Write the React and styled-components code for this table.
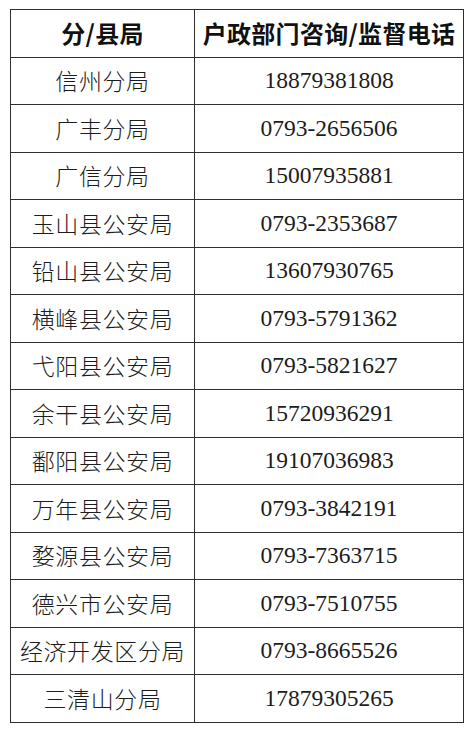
import React from 'react';
import styled, { createGlobalStyle } from 'styled-components';

const rows = [
	['信州分局', '18879381808'],
	['广丰分局', '0793-2656506'],
	['广信分局', '15007935881'],
	['玉山县公安局', '0793-2353687'],
	['铅山县公安局', '13607930765'],
	['横峰县公安局', '0793-5791362'],
	['弋阳县公安局', '0793-5821627'],
	['余干县公安局', '15720936291'],
	['鄱阳县公安局', '19107036983'],
	['万年县公安局', '0793-3842191'],
	['婺源县公安局', '0793-7363715'],
	['德兴市公安局', '0793-7510755'],
	['经济开发区分局', '0793-8665526'],
	['三清山分局', '17879305265'],
];

const App = () => {
	return (
		<>
			<GlobalStyle />
			<Page>
				<Table>
					<colgroup>
						<col style={{ width: '184px' }} />
						<col />
					</colgroup>
					<thead>
						<Row>
							<HeadCell>分/县局</HeadCell>
							<HeadCell>户政部门咨询/监督电话</HeadCell>
						</Row>
					</thead>
					<tbody>
						{rows.map(([name, phone]) => (
							<Row key={name}>
								<NameCell>{name}</NameCell>
								<PhoneCell>{phone}</PhoneCell>
							</Row>
						))}
					</tbody>
				</Table>
			</Page>
		</>
	);
};

export default App;

const GlobalStyle = createGlobalStyle`
	html, body {
		margin: 0;
		padding: 0;
		background: #ffffff;
	}
`;

const Page = styled.main`
	width: 470px;
	height: 730px;
	padding: 9px 0 0 10px;
	box-sizing: border-box;
	background: #ffffff;
`;

const Table = styled.table`
	width: 454px;
	border-collapse: collapse;
	table-layout: fixed;
	border: 1px solid #2a2a2a;
`;

const Row = styled.tr`
	height: 47.5px;
`;

const Cell = styled.td`
	border: 1px solid #2e2e2e;
	padding: 0;
	text-align: center;
	vertical-align: middle;
	color: #1c1c1c;
	white-space: nowrap;
	line-height: 1;
`;

const HeadCell = styled(Cell).attrs({ as: 'th' })`
	font-family: 'Noto Sans CJK SC', 'Noto Sans', sans-serif;
	font-size: 24px;
	font-weight: 700;
	letter-spacing: 0.3px;
	color: #111111;
`;

const NameCell = styled(Cell)`
	font-family: 'Noto Sans CJK SC', 'Noto Sans', sans-serif;
	font-size: 23px;
	font-weight: 300;
	letter-spacing: 0.6px;
`;

const PhoneCell = styled(Cell)`
	font-family: 'Liberation Serif', 'Times New Roman', serif;
	font-size: 23.5px;
	font-weight: 400;
`;
